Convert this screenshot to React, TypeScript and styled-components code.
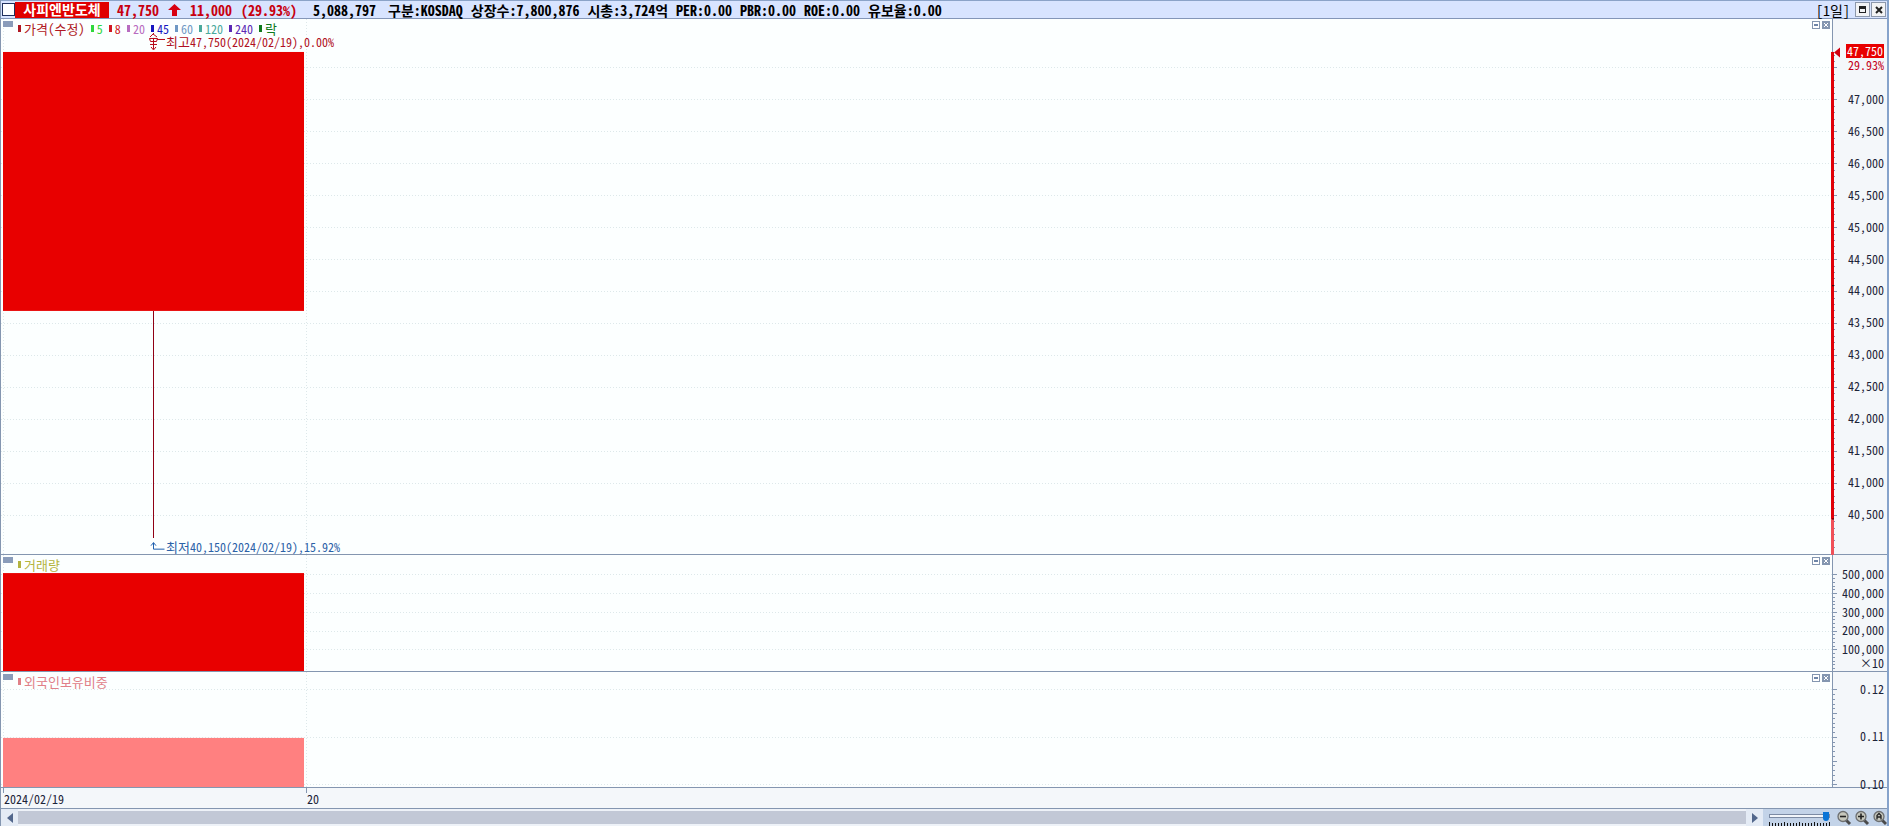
import React from 'react';
import styled, { createGlobalStyle } from 'styled-components';

const Global = createGlobalStyle`
  * { box-sizing: border-box; }
  html, body { margin: 0; padding: 0; }
  body { overflow: hidden; }
`;

const TEXT = `'Noto Sans Mono CJK KR', 'DejaVu Sans Mono', 'Noto Sans CJK KR', monospace`;
const LINE = '#8496b0';

const Frame = styled.div`
  display: flex;
  flex-direction: column;
  height: 100vh;
  min-height: 480px;
  background: #d8e3f2;
  font-family: ${TEXT};
  font-size: 12px;
  line-height: 16px;
  color: #1c2338;
  border-left: 1px solid ${LINE};
  border-right: 2px solid #86a3cb;
`;

const Header = styled.header`
  display: flex;
  align-items: center;
  flex: none;
  height: 19px;
  padding-left: 1px;
  background: #d8e4ff;
  border-top: 1px solid #8ba3c8;
  border-bottom: 1px solid #8496b8;
  font: bold 14px/16px ${TEXT};
  color: #000;
  white-space: pre;
`;

const PickBox = styled.input`
  appearance: none;
  width: 13px;
  height: 13px;
  margin: 0;
  background: #fff;
  border: 1px solid #20305c;
`;

const StockName = styled.h1`
  margin: 0;
  width: 94px;
  height: 16px;
  font: bold 14px/15px ${TEXT};
  text-align: center;
  background: #e00000;
  color: #fff;
`;

const Quote = styled.div`
  display: flex;
  align-items: center;
  gap: 9px;
  margin-left: 8px;
  color: #c80010;
`;

const Facts = styled.div`
  display: flex;
  align-items: center;
  gap: 8px;
  margin-left: 16px;
`;

const Volume = styled.span`
  margin-right: 4px;
`;

const Period = styled.span`
  margin-left: auto;
  font: 14px/16px ${TEXT};
`;

const WindowButton = styled.button`
  display: grid;
  place-items: center;
  width: 15px;
  height: 15px;
  padding: 0;
  margin-left: 1px;
  background: #f2f3f5;
  border: 1px solid #8d98ab;
`;

const WindowButtons = styled.div`
  display: flex;
  margin: 0 1px 0 4px;
`;

const Panel = styled.section<{ $grow: number }>`
  display: flex;
  flex: ${(p) => p.$grow} 1 0;
  min-height: 0;
  border-bottom: 1px solid ${LINE};
`;

const Plot = styled.div`
  position: relative;
  flex: 1;
  min-width: 0;
  background: #fcffff;
`;

const Canvas = styled.svg`
  position: absolute;
  inset: 0;
  width: 100%;
  height: 100%;
  overflow: hidden;
`;

const Scale = styled.div`
  position: relative;
  width: 54px;
  background: #f4f7fa;
`;

const ScaleCanvas = styled(Canvas)`
  left: -2px;
  width: 16px;
  overflow: visible;
`;

const ScaleLabels = styled.div`
  display: flex;
  flex-direction: column;
  height: 100%;
  padding-right: 3px;
`;

const Spacer = styled.div<{ $grow: number }>`
  flex: ${(p) => p.$grow} 1 0;
  min-height: 0;
`;

const Step = styled.div<{ $grow: number }>`
  display: flex;
  align-items: center;
  justify-content: flex-end;
  flex: ${(p) => p.$grow} 1 0;
  min-height: 0;
`;

const Factor = styled.div`
  position: absolute;
  right: 3px;
  bottom: 2px;
  line-height: 12px;
`;

const LastPrice = styled.div`
  position: absolute;
  top: 25px;
  right: 3px;
  display: flex;
  flex-direction: column;
  align-items: flex-end;
  line-height: 14px;
  color: #c40018;
`;

const LastValue = styled.span`
  padding: 0 1px;
  background: #e80000;
  color: #fff;
`;

const Tab = styled.div`
  position: absolute;
  left: 2px;
  top: 2px;
  width: 10px;
  height: 6px;
  background: #8a9cba;
`;

const Legend = styled.ul`
  position: absolute;
  left: 17px;
  top: 3px;
  display: flex;
  gap: 6px;
  margin: 0;
  padding: 0;
  line-height: 13px;
  list-style: none;
`;

const LegendItem = styled.li<{ $color: string; $hangul?: boolean }>`
  display: flex;
  align-items: center;
  gap: 3px;
  font-size: ${(p) => (p.$hangul ? 13 : 12)}px;
  color: ${(p) => p.$color};
  &::before {
    content: '';
    width: 3px;
    height: 7px;
    background: ${(p) => p.$color};
  }
`;

const Note = styled.div<{ $color: string; $end?: boolean }>`
  position: absolute;
  left: 165px;
  ${(p) => (p.$end ? 'bottom: 1px;' : 'top: 16px;')}
  line-height: 13px;
  color: ${(p) => p.$color};
  white-space: pre;
  span { font-size: 13px; }
`;

const PanelButtons = styled.div`
  position: absolute;
  top: 2px;
  right: 3px;
  display: flex;
  gap: 2px;
`;

const PanelButton = styled.button`
  width: 8px;
  height: 8px;
  padding: 0;
  border: 0;
  background: none;
  svg { display: block; }
`;

const TimeAxis = styled.div`
  display: flex;
  flex: none;
  height: 21px;
  padding-left: 2px;
  background: #f4f7fa;
  border-bottom: 1px solid ${LINE};
`;

const TimeLabel = styled.div<{ $wide?: boolean }>`
  position: relative;
  width: ${(p) => (p.$wide ? '303px' : 'auto')};
  padding: 3px 0 0 1px;
  &::before {
    content: '';
    position: absolute;
    left: 0;
    top: 0;
    width: 1px;
    height: 5px;
    background: ${LINE};
  }
`;

const Footer = styled.footer`
  display: flex;
  flex: none;
  height: 17px;
  background: #c3d3e8;
`;

const ArrowButton = styled.button`
  display: grid;
  place-items: center;
  width: 17px;
  padding: 0;
  border: 0;
  background: #e4ebf5;
`;

const Track = styled.div`
  flex: 1;
  padding: 2px 0;
  background: #eef2f8;
`;

const Thumb = styled.div`
  height: 13px;
  background: #c2c8d6;
`;

const ZoomBar = styled.div`
  display: flex;
  align-items: flex-start;
  width: 124px;
  padding-left: 6px;
  overflow: hidden;
`;

const ZoomScale = styled.div`
  display: flex;
  flex-direction: column;
  width: 62px;
  gap: 1px;
  padding-top: 2px;
`;

const ZoomSlider = styled.input`
  appearance: none;
  display: block;
  width: 61px;
  height: 10px;
  margin: 0;
  background: none;
  &::-webkit-slider-runnable-track {
    height: 4px;
    background: #f2f6fb;
    border: 1px solid #7c8ba4;
  }
  &::-webkit-slider-thumb {
    appearance: none;
    width: 6px;
    height: 9px;
    margin-top: -3px;
    background: #0a74d6;
    border-radius: 0 0 3px 3px;
  }
`;

const Lenses = styled.div`
  display: flex;
  gap: 2px;
  padding: 1px 0 0 5px;
`;

const LensButton = styled.button`
  flex: none;
  width: 16px;
  height: 16px;
  padding: 0;
  border: 0;
  background: none;
  svg { display: block; }
`;

const won = (n: number) => n.toLocaleString('en-US');
const range = (from: number, to: number, step: number) => {
  const out: number[] = [];
  const count = Math.round((to - from) / step);
  for (let i = 0; i <= count; i++) out.push(from + i * step);
  return out;
};
const scaleOf = (top: number, bottom: number) => (v: number) => `${((top - v) / (top - bottom)) * 100}%`;

const BAR_X = 2;
const BAR_W = 301;

interface GridProps {
  rows: number[];
  y: (v: number) => string;
}

const Grid = ({ rows, y }: GridProps) => (
  <g stroke="#dde8ea" strokeDasharray="1 2" shapeRendering="crispEdges">
    {rows.map((v) => (
      <line key={v} x1="0" x2="100%" y1={y(v)} y2={y(v)} />
    ))}
    <line x1="2.5" x2="2.5" y1="0" y2="100%" />
    <line x1="305.5" x2="305.5" y1="0" y2="100%" />
  </g>
);

interface TicksProps extends GridProps {
  minor: number[];
}

const Ticks = ({ rows, minor, y }: TicksProps) => (
  <g stroke={LINE} shapeRendering="crispEdges">
    <line x1="1.5" x2="1.5" y1="0" y2="100%" />
    {minor.map((v) => (
      <line key={`m${v}`} x1="2" x2="4" y1={y(v)} y2={y(v)} />
    ))}
    {rows.map((v) => (
      <line key={v} x1="2" x2="6" y1={y(v)} y2={y(v)} />
    ))}
  </g>
);

const PanelTools = () => (
  <PanelButtons>
    <PanelButton aria-label="최대화">
      <svg width="8" height="8" shapeRendering="crispEdges">
        <rect x="0.5" y="0.5" width="7" height="7" fill="#fff" stroke="#8496b0" />
        <rect x="2" y="3" width="4" height="2" fill="#6f86a8" />
      </svg>
    </PanelButton>
    <PanelButton aria-label="닫기">
      <svg width="8" height="8">
        <rect width="8" height="8" fill="#8496b0" />
        <path d="M2 2l4 4M6 2l-4 4" stroke="#fff" />
      </svg>
    </PanelButton>
  </PanelButtons>
);

const Lens = ({ kind }: { kind: 'minus' | 'plus' | 'auto' }) => (
  <svg width="16" height="16" fill="none">
    <path d="M10 10l4 4" stroke="#4b4b4b" strokeWidth="3" />
    <circle cx="7" cy="6.5" r="5" fill="#c6c7bd" stroke="#6d6f70" strokeWidth="1.3" />
    {kind === 'minus' && <path d="M4 6.5h6" stroke="#222" strokeWidth="1.6" />}
    {kind === 'plus' && <path d="M4 6.5h6M7 3.5v6" stroke="#222" strokeWidth="1.6" />}
    {kind === 'auto' && <path d="M5 9.5V5.5L7 3.5l2 2v4M5 7h4" stroke="#222" strokeWidth="1.3" />}
  </svg>
);

const averages = [
  { days: '5', color: '#2fd83c' },
  { days: '8', color: '#d01822' },
  { days: '20', color: '#b86cc0' },
  { days: '45', color: '#1616c0' },
  { days: '60', color: '#6f98c4' },
  { days: '120', color: '#4aa99c' },
  { days: '240', color: '#5a28b4' },
];

const facts = [
  '구분:KOSDAQ',
  '상장수:7,800,876',
  '시총:3,724억',
  'PER:0.00',
  'PBR:0.00',
  'ROE:0.00',
  '유보율:0.00',
];

const price = scaleOf(48266, 39894);
const volume = scaleOf(605000, -12000);
const share = scaleOf(0.12378, 0.09957);

const priceRows = range(40500, 47500, 500);
const volumeRows = range(100000, 500000, 100000);
const shareRows = [0.12, 0.11, 0.1];

export default function App() {
  return (
    <Frame>
      <Global />
      <Header>
        <PickBox type="checkbox" aria-label="종목 선택" />
        <StockName>사피엔반도체</StockName>
        <Quote>
          <span>47,750</span>
          <svg width="13" height="12">
            <path d="M6.500 0L13 6H9v6H4V6H0z" fill="#d80010" />
          </svg>
          <span>11,000</span>
          <span>(29.93%)</span>
        </Quote>
        <Facts>
          <Volume>5,088,797</Volume>
          {facts.map((fact) => (
            <span key={fact}>{fact}</span>
          ))}
        </Facts>
        <Period>[1일]</Period>
        <WindowButtons>
          <WindowButton aria-label="창 최대화">
            <svg width="7" height="7" shapeRendering="crispEdges">
              <path d="M0 0h7v7H0zM1 3v3h5V3z" fill="#222" fillRule="evenodd" />
            </svg>
          </WindowButton>
          <WindowButton aria-label="창 닫기">
            <svg width="8" height="8">
              <path d="M1 1l6 6M7 1L1 7" stroke="#222" strokeWidth="2" />
            </svg>
          </WindowButton>
        </WindowButtons>
      </Header>

      <Panel $grow={535}>
        <Plot>
          <Canvas>
            <Grid rows={priceRows} y={price} />
            <svg y={price(47750)} overflow="visible">
              <rect x={BAR_X} width={BAR_W} height="48.4%" fill="#e80000" />
            </svg>
            <line x1="152.500" x2="152.500" y1={price(43700)} y2={price(40150)} stroke="#900014" shapeRendering="crispEdges" />
            <svg y={price(47750)} overflow="visible" fill="none" stroke="#b80818">
              <path d="M152.500 -14v11M150 -5l2.500 3 2.500 -3M149 -7.500h7M148.500 -13.500l1 3h6l1 -3zM156 -12.500h8M153 -19l-4 4M152 -18l4 3" />
            </svg>
            <svg y={price(40150)} overflow="visible" fill="none" stroke="#1f5fae">
              <path d="M152.500 5v6.500h11M150 8l2.500 -3 2.500 3" />
            </svg>
          </Canvas>
          <Tab />
          <Legend>
            <LegendItem $color="#b01822" $hangul>가격(수정)</LegendItem>
            {averages.map((a) => (
              <LegendItem key={a.days} $color={a.color}>{a.days}</LegendItem>
            ))}
            <LegendItem $color="#0f7a1c" $hangul>락</LegendItem>
          </Legend>
          <Note $color="#b01022"><span>최고</span>47,750(2024/02/19),0.00%</Note>
          <Note $color="#2c62a8" $end><span>최저</span>40,150(2024/02/19),15.92%</Note>
          <PanelTools />
        </Plot>
        <Scale>
          <ScaleCanvas>
            <Ticks rows={priceRows} minor={range(40000, 47700, 100)} y={price} />
            <rect x="0" y={price(47750)} width="3" height="94%" fill="#f05058" />
            <rect x="0" y={price(47750)} width="3" height="87.300%" fill="#e00008" />
            <rect x="1" y={price(40450)} width="2" height="1" fill="#300" />
            <rect x="1" y={price(44100)} width="2" height="1" fill="#300" />
            <svg y={price(47750)} overflow="visible">
              <path d="M3 0.500l6 -5v10z" fill="#d00010" />
            </svg>
          </ScaleCanvas>
          <ScaleLabels>
            <Spacer $grow={64} />
            {range(40500, 47000, 500).reverse().map((v) => (
              <Step key={v} $grow={32}>{won(v)}</Step>
            ))}
            <Spacer $grow={24} />
          </ScaleLabels>
          <LastPrice>
            <LastValue>47,750</LastValue>
            <span>29.93%</span>
          </LastPrice>
        </Scale>
      </Panel>

      <Panel $grow={116}>
        <Plot>
          <Canvas>
            <Grid rows={volumeRows} y={volume} />
            <rect x={BAR_X} y={volume(508880)} width={BAR_W} height="100%" fill="#e80000" />
          </Canvas>
          <Tab />
          <Legend>
            <LegendItem $color="#b4b440" $hangul>거래량</LegendItem>
          </Legend>
          <PanelTools />
        </Plot>
        <Scale>
          <ScaleCanvas>
            <Ticks rows={volumeRows} minor={range(0, 500000, 20000)} y={volume} />
          </ScaleCanvas>
          <ScaleLabels>
            <Spacer $grow={10} />
            {[...volumeRows].reverse().map((v) => (
              <Step key={v} $grow={19}>{won(v)}</Step>
            ))}
            <Spacer $grow={13} />
          </ScaleLabels>
          <Factor>×10</Factor>
        </Scale>
      </Panel>

      <Panel $grow={115}>
        <Plot>
          <Canvas>
            <Grid rows={shareRows} y={share} />
            <rect x={BAR_X} y={share(0.1099)} width={BAR_W} height="100%" fill="#ff8080" />
          </Canvas>
          <Tab />
          <Legend>
            <LegendItem $color="#e08088" $hangul>외국인보유비중</LegendItem>
          </Legend>
          <PanelTools />
        </Plot>
        <Scale>
          <ScaleCanvas>
            <Ticks rows={[...shareRows, 0.115, 0.105]} minor={range(0.1, 0.12, 0.001)} y={share} />
          </ScaleCanvas>
          <ScaleLabels>
            <Spacer $grow={17} />
            <Step $grow={0}>0.12</Step>
            <Spacer $grow={47} />
            <Step $grow={0}>0.11</Step>
            <Spacer $grow={48} />
            <Step $grow={0}>0.10</Step>
            <Spacer $grow={3} />
          </ScaleLabels>
        </Scale>
      </Panel>

      <TimeAxis>
        <TimeLabel $wide>2024/02/19</TimeLabel>
        <TimeLabel>20</TimeLabel>
      </TimeAxis>

      <Footer>
        <ArrowButton aria-label="이전">
          <svg width="6" height="10"><path d="M6 0v10L0 5z" fill="#52678c" /></svg>
        </ArrowButton>
        <Track><Thumb /></Track>
        <ArrowButton aria-label="다음">
          <svg width="6" height="10"><path d="M0 0v10l6-5z" fill="#52678c" /></svg>
        </ArrowButton>
        <ZoomBar>
          <ZoomScale>
            <ZoomSlider type="range" defaultValue={100} aria-label="확대 비율" />
            <svg width="62" height="4" shapeRendering="crispEdges">
              {range(0, 20, 1).map((i) => (
                <rect key={i} x={i * 3} y={i % 5 === 0 ? 0 : 1} width="1" height="4" fill="#111" />
              ))}
            </svg>
          </ZoomScale>
          <Lenses>
            <LensButton aria-label="축소"><Lens kind="minus" /></LensButton>
            <LensButton aria-label="확대"><Lens kind="plus" /></LensButton>
            <LensButton aria-label="자동"><Lens kind="auto" /></LensButton>
          </Lenses>
        </ZoomBar>
      </Footer>
    </Frame>
  );
}
